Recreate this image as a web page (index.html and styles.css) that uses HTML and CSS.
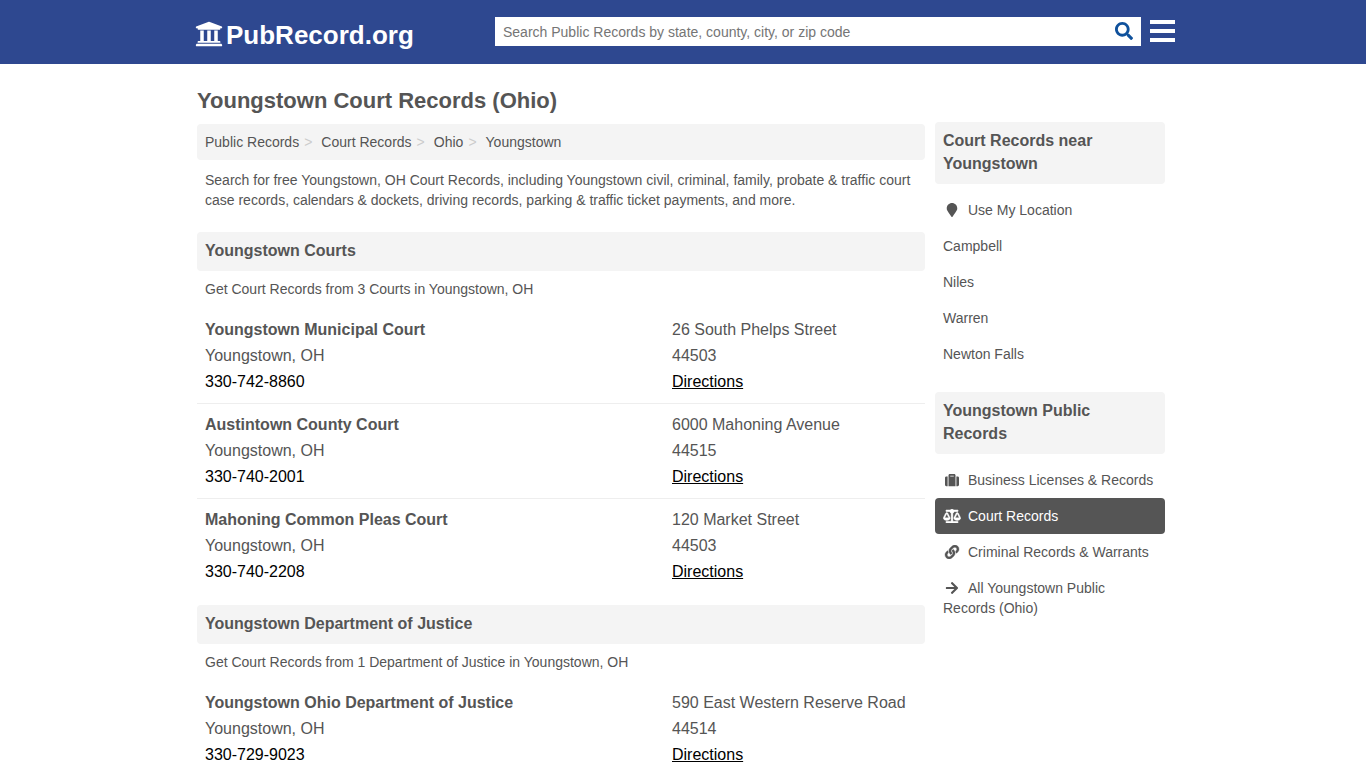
FILE: index.html
```html
<!DOCTYPE html>
<html lang="en">
<head>
<meta charset="utf-8">
<meta name="viewport" content="width=device-width, initial-scale=1">
<title>Youngstown Court Records (Ohio)</title>
<link rel="stylesheet" href="styles.css">
</head>
<body>
<header class="site-header">
  <div class="container header-row">
    <a class="brand" href="#">
      <svg class="brand-icon" viewBox="0 0 512 512" aria-hidden="true"><path d="M496 128v16a8 8 0 0 1-8 8h-24v12c0 6.627-5.373 12-12 12H60c-6.627 0-12-5.373-12-12v-12H24a8 8 0 0 1-8-8v-16a8 8 0 0 1 4.941-7.392l232-88a7.996 7.996 0 0 1 6.118 0l232 88A8 8 0 0 1 496 128zm-24 304H40c-13.255 0-24 10.745-24 24v16a8 8 0 0 0 8 8h464a8 8 0 0 0 8-8v-16c0-13.255-10.745-24-24-24zM96 192v192H60c-6.627 0-12 5.373-12 12v20h416v-20c0-6.627-5.373-12-12-12h-36V192h-64v192h-64V192h-64v192h-64V192H96z"/></svg>
      <span>PubRecord.org</span>
    </a>
    <form class="search" role="search">
      <input class="search-input" type="text" aria-label="Search Public Records" placeholder="Search Public Records by state, county, city, or zip code">
      <button class="search-button" type="button" aria-label="Search">
        <svg class="search-icon" viewBox="0 0 512 512" aria-hidden="true"><path d="M505 442.7L405.3 343c-4.500-4.500-10.600-7-17-7H372c27.600-35.300 44-79.700 44-128C416 93.100 322.900 0 208 0S0 93.100 0 208s93.100 208 208 208c48.300 0 92.700-16.400 128-44v16.300c0 6.400 2.500 12.500 7 17l99.700 99.700c9.400 9.400 24.600 9.400 33.900 0l28.300-28.300c9.400-9.400 9.400-24.600.1-34zM208 336c-70.700 0-128-57.200-128-128 0-70.700 57.200-128 128-128 70.700 0 128 57.200 128 128 0 70.700-57.200 128-128 128z"/></svg>
      </button>
    </form>
    <button class="menu-button" type="button" aria-label="Menu">
      <svg class="menu-icon" viewBox="0 0 25 22" aria-hidden="true"><path d="M0 0h25v4H0zM0 9h25v4H0zM0 18h25v4H0z"/></svg>
    </button>
  </div>
</header>

<div class="container layout">
  <main class="main">
    <h1 class="page-title">Youngstown Court Records (Ohio)</h1>
    <nav aria-label="Breadcrumb">
      <ol class="breadcrumb">
        <li><a href="#">Public Records</a></li>
        <li><a href="#">Court Records</a></li>
        <li><a href="#">Ohio</a></li>
        <li><a href="#">Youngstown</a></li>
      </ol>
    </nav>
    <p class="intro">Search for free Youngstown, OH Court Records, including Youngstown civil, criminal, family, probate &amp; traffic court case records, calendars &amp; dockets, driving records, parking &amp; traffic ticket payments, and more.</p>

    <section class="group">
      <h2 class="box-title">Youngstown Courts</h2>
      <p class="group-note">Get Court Records from 3 Courts in Youngstown, OH</p>
      <article class="office">
        <div class="office-info"><h3 class="office-name">Youngstown Municipal Court</h3><p>Youngstown, OH</p><a class="phone" href="#">330-742-8860</a></div>
        <div class="office-address"><p>26 South Phelps Street</p><p>44503</p><a class="directions" href="#">Directions</a></div>
      </article>
      <article class="office">
        <div class="office-info"><h3 class="office-name">Austintown County Court</h3><p>Youngstown, OH</p><a class="phone" href="#">330-740-2001</a></div>
        <div class="office-address"><p>6000 Mahoning Avenue</p><p>44515</p><a class="directions" href="#">Directions</a></div>
      </article>
      <article class="office">
        <div class="office-info"><h3 class="office-name">Mahoning Common Pleas Court</h3><p>Youngstown, OH</p><a class="phone" href="#">330-740-2208</a></div>
        <div class="office-address"><p>120 Market Street</p><p>44503</p><a class="directions" href="#">Directions</a></div>
      </article>
    </section>

    <section class="group">
      <h2 class="box-title">Youngstown Department of Justice</h2>
      <p class="group-note">Get Court Records from 1 Department of Justice in Youngstown, OH</p>
      <article class="office">
        <div class="office-info"><h3 class="office-name">Youngstown Ohio Department of Justice</h3><p>Youngstown, OH</p><a class="phone" href="#">330-729-9023</a></div>
        <div class="office-address"><p>590 East Western Reserve Road</p><p>44514</p><a class="directions" href="#">Directions</a></div>
      </article>
    </section>
  </main>

  <aside class="sidebar">
    <section>
      <h2 class="box-title">Court Records near Youngstown</h2>
      <ul class="side-list">
        <li><a class="side-link" href="#"><svg class="icon" viewBox="-64 0 512 512" aria-hidden="true"><path d="M172.268 501.670C26.970 291.031 0 269.413 0 192 0 85.961 85.961 0 192 0s192 85.961 192 192c0 77.413-26.970 99.031-172.268 309.670-9.535 13.774-29.930 13.773-39.464 0z"/></svg>Use My Location</a></li>
        <li><a class="side-link" href="#">Campbell</a></li>
        <li><a class="side-link" href="#">Niles</a></li>
        <li><a class="side-link" href="#">Warren</a></li>
        <li><a class="side-link" href="#">Newton Falls</a></li>
      </ul>
    </section>
    <section>
      <h2 class="box-title">Youngstown Public Records</h2>
      <ul class="side-list">
        <li><a class="side-link" href="#"><svg class="icon" viewBox="0 0 512 512" aria-hidden="true"><path d="M128 480h256V80c0-26.500-21.500-48-48-48H176c-26.500 0-48 21.500-48 48v400zm64-384h128v32H192V96zm320 80v256c0 26.500-21.500 48-48 48h-48V128h48c26.500 0 48 21.500 48 48zM96 480H48c-26.500 0-48-21.500-48-48V176c0-26.500 21.500-48 48-48h48v352z"/></svg>Business Licenses &amp; Records</a></li>
        <li><a class="side-link is-active" href="#" aria-current="page"><svg class="icon icon-bold" viewBox="0 0 640 512" aria-hidden="true"><path d="M256 336h-.020c0-16.180 1.340-8.730-85.050-181.510-17.650-35.290-68.190-35.360-85.870 0C-2.060 328.750.020 320.330.020 336H0c0 44.180 57.310 80 128 80s128-35.820 128-80zM128 176l72 144H56l72-144zm511.980 160c0-16.180 1.340-8.730-85.050-181.510-17.650-35.290-68.190-35.360-85.870 0-87.120 174.260-85.040 165.840-85.040 181.510H384c0 44.180 57.310 80 128 80s128-35.820 128-80h-.020zM440 320l72-144 72 144H440zm88 128H352V153.250c23.510-10.290 41.160-31.480 46.390-57.250H528c8.840 0 16-7.160 16-16V48c0-8.840-7.160-16-16-16H383.640C369.040 12.680 346.090 0 320 0s-49.040 12.680-63.640 32H112c-8.840 0-16 7.160-16 16v32c0 8.840 7.160 16 16 16h129.610c5.230 25.760 22.870 46.960 46.390 57.250V448H112c-8.840 0-16 7.160-16 16v32c0 8.840 7.160 16 16 16h416c8.840 0 16-7.160 16-16v-32c0-8.840-7.160-16-16-16z"/></svg>Court Records</a></li>
        <li><a class="side-link" href="#"><svg class="icon icon-bold" viewBox="0 0 512 512" aria-hidden="true"><path d="M326.612 185.391c59.747 59.809 58.927 155.698.360 214.590-.110.120-.240.250-.360.370l-67.200 67.200c-59.270 59.270-155.699 59.262-214.960 0-59.270-59.260-59.270-155.700 0-214.960l37.106-37.106c9.840-9.840 26.786-3.300 27.294 10.606.648 17.722 3.826 35.527 9.690 52.721 1.986 5.822.567 12.262-3.783 16.612l-13.087 13.087c-28.026 28.026-28.905 73.660-1.155 101.960 28.024 28.579 74.086 28.749 102.325.510l67.200-67.190c28.191-28.191 28.073-73.757 0-101.830-3.701-3.694-7.429-6.564-10.341-8.569a16.037 16.037 0 0 1-6.947-12.606c-.396-10.567 3.348-21.456 11.698-29.806l21.054-21.055c5.521-5.521 14.182-6.199 20.584-1.731a152.482 152.482 0 0 1 20.522 17.197zM467.547 44.449c-59.261-59.262-155.690-59.270-214.960 0l-67.200 67.200c-.120.120-.250.250-.360.370-58.566 58.892-59.387 154.781.360 214.590a152.454 152.454 0 0 0 20.521 17.196c6.402 4.468 15.064 3.789 20.584-1.731l21.054-21.055c8.350-8.350 12.094-19.239 11.698-29.806a16.037 16.037 0 0 0-6.947-12.606c-2.912-2.005-6.640-4.875-10.341-8.569-28.073-28.073-28.191-73.639 0-101.830l67.200-67.190c28.239-28.239 74.300-28.069 102.325.510 27.750 28.300 26.872 73.934-1.155 101.960l-13.087 13.087c-4.350 4.350-5.769 10.790-3.783 16.612 5.864 17.194 9.042 34.999 9.690 52.721.509 13.906 17.454 20.446 27.294 10.606l37.106-37.106c59.271-59.259 59.271-155.699.001-214.959z"/></svg>Criminal Records &amp; Warrants</a></li>
        <li><a class="side-link" href="#"><svg class="icon" viewBox="-32 0 512 512" aria-hidden="true"><path d="M190.500 66.900l22.200-22.200c9.400-9.400 24.600-9.400 33.900 0L441 239c9.400 9.400 9.400 24.600 0 33.900L246.600 467.300c-9.400 9.400-24.600 9.400-33.900 0l-22.200-22.200c-9.500-9.500-9.300-25 .400-34.300L311.400 296H24c-13.300 0-24-10.700-24-24v-32c0-13.300 10.700-24 24-24h287.400L190.900 101.200c-9.800-9.300-10-24.800-.400-34.300z"/></svg>All Youngstown Public Records (Ohio)</a></li>
      </ul>
    </section>
  </aside>
</div>
</body>
</html>
```
FILE: styles.css
```css
* { box-sizing: border-box; }

body {
  margin: 0;
  background: #fff;
  color: #555;
  font-family: "Liberation Sans", Arial, sans-serif;
  font-size: 14px;
  line-height: 20px;
}

h1, h2, h3, p, ul, ol { margin: 0; padding: 0; }
ul, ol { list-style: none; }
a { color: inherit; text-decoration: none; }
button { padding: 0; border: 0; background: none; cursor: pointer; }
svg { fill: currentColor; }

.container {
  max-width: 972px;
  margin: 0 auto;
  padding-right: 4px;
}

.site-header { background: #2e4890; color: #fff; }

.header-row {
  display: flex;
  align-items: center;
  min-height: 64px;
  padding-bottom: 2px;
}

.brand {
  display: flex;
  align-items: center;
  flex: 1;
  gap: 3px;
  padding-top: 8px;
  font-size: 26px;
  font-weight: bold;
  line-height: 32px;
}
.brand-icon { width: 28px; height: 28px; margin: 0 0 2px -2px; }

.search {
  display: flex;
  flex: 0 1 646px;
  height: 29px;
  margin-right: 9px;
  background: #fff;
}
.search-input {
  flex: 1;
  min-width: 0;
  padding: 1px 8px 0;
  border: 0;
  background: none;
  font: inherit;
}
.search-input::placeholder { color: #757575; }
.search-button { width: 34px; color: #0f519c; }
.search-icon { display: block; width: 18px; height: 18px; margin: 0 auto; }
.menu-button { margin-right: -10px; color: #fff; }
.menu-icon { display: block; width: 25px; height: 22px; }

.layout { display: flex; gap: 10px; }
.main { flex: 1; min-width: 0; padding-top: 21px; }
.sidebar { flex: 0 0 230px; padding-top: 58px; }

.page-title { padding-bottom: 7px; font-size: 22px; line-height: 32px; }

.breadcrumb {
  display: flex;
  padding: 8px;
  border-radius: 4px;
  background: #f4f4f4;
}
.breadcrumb li + li::before {
  content: ">";
  padding: 0 9px 0 5px;
  color: #ccc;
}

.intro { padding: 10px 8px 22px; }

.box-title {
  padding: 7px 8px 9px;
  border-radius: 4px;
  background: #f4f4f4;
  font-size: 16px;
  line-height: 23px;
}

.group + .group { margin-top: 11px; }
.group-note { padding: 8px 8px 10px; }

.office {
  display: flex;
  padding: 8px;
  border-bottom: 1px solid #eee;
  font-size: 16px;
  line-height: 26px;
}
.office:last-child { border-bottom-color: transparent; }
.office-info { flex: 1; }
.office-address { flex: 0 0 245px; }
.office-name { font-size: 16px; }
.phone, .directions { color: #000; }
.directions { text-decoration: underline; }

.side-list { padding: 8px 0 20px; }
.side-link { display: block; padding: 8px; border-radius: 4px; }
.side-link.is-active { background: #555; color: #fff; }
.icon {
  width: 18px;
  height: 14px;
  margin-right: 7px;
  vertical-align: -2px;
}
.icon-bold { stroke: currentColor; stroke-width: 14; }
```
